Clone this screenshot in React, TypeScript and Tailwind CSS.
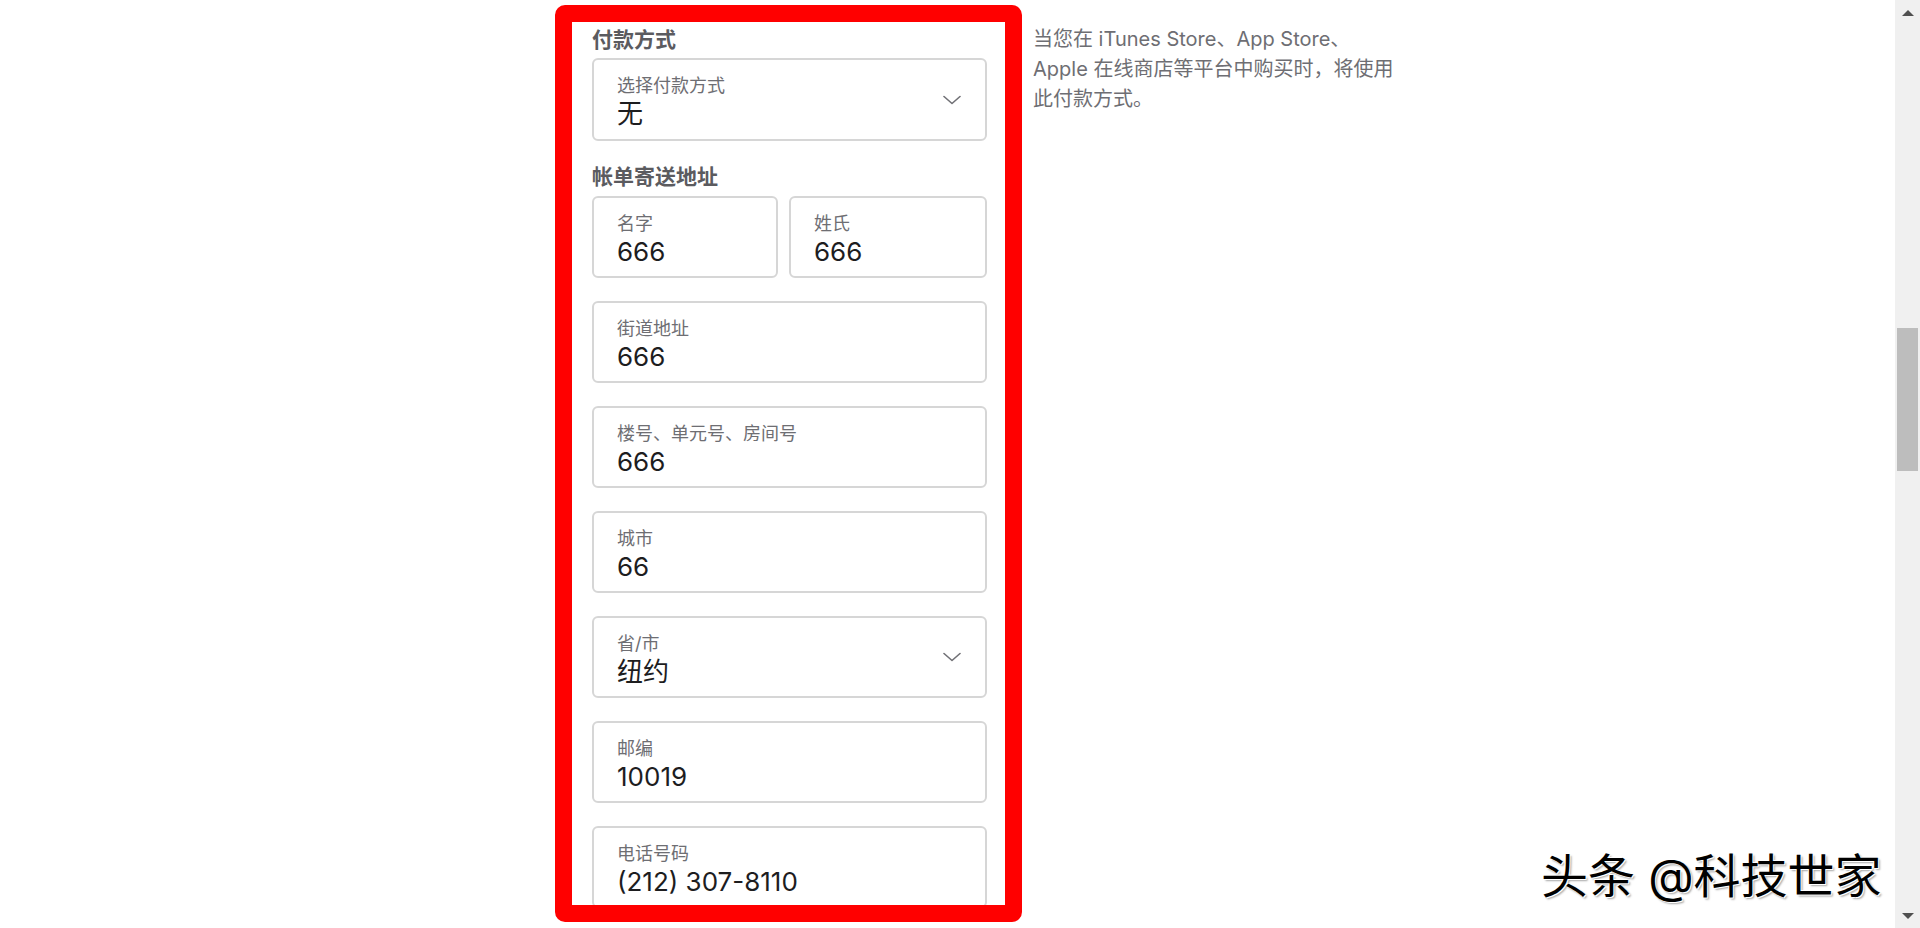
import React from 'react';

const font = 'Inter, "Noto Sans CJK SC", sans-serif';

interface FieldProps {
  label: string;
  value: string;
  select?: boolean;
  tall?: boolean;
}

function Field({ label, value, select, tall }: FieldProps) {
  return (
    <div
      className={`relative flex items-center border-2 border-[#d6d6d6] rounded-[6px] bg-white ${
        tall ? 'h-[83px]' : 'h-[82px]'
      }`}
    >
      <div className="flex-1 pl-[23px] pt-[15px] self-start">
        <div className="text-[18px] leading-[22px] text-[#6e6e73]">{label}</div>
        <div className="mt-[3px] text-[26px] leading-[28px] text-[#1d1d1f]">{value}</div>
      </div>
      {select && (
        <svg className="mr-[24px] w-[18px] h-[10px]" viewBox="0 0 18 10" fill="none">
          <path d="M1 1.5 L9 8.5 L17 1.5" stroke="#707075" strokeWidth="1.6" strokeLinecap="round" strokeLinejoin="round" />
        </svg>
      )}
    </div>
  );
}

function Scrollbar() {
  return (
    <div className="w-[25px] h-[928px] bg-[#f0f0f0] flex flex-col items-center shrink-0">
      <div className="mt-[10px] w-0 h-0 border-l-[6px] border-r-[6px] border-b-[6px] border-l-transparent border-r-transparent border-b-[#505050]" />
      <div className="mt-[312px] w-[21px] h-[143px] bg-[#bdbdbd]" />
      <div className="mt-[442px] w-0 h-0 border-l-[6px] border-r-[6px] border-t-[6px] border-l-transparent border-r-transparent border-t-[#505050]" />
    </div>
  );
}

export default function App() {
  return (
    <div className="relative w-[1920px] h-[928px] bg-white overflow-hidden flex" style={{ fontFamily: font }}>
      <div className="flex-1 flex pl-[555px] pt-[5px]">
        {/* annotated form */}
        <div className="w-[467px] h-[917px] border-[17px] border-[#ff0000] rounded-[10px] overflow-hidden bg-white shrink-0">
          <div className="pl-[20px] pr-[18px] pt-[5px] flex flex-col">
            <h3 className="text-[21px] leading-[26px] font-bold text-[#5b5b5f]">付款方式</h3>
            <div className="mt-[5px]">
              <Field label="选择付款方式" value="无" select tall />
            </div>
            <h3 className="mt-[23px] text-[21px] leading-[26px] font-bold text-[#5b5b5f]">帐单寄送地址</h3>
            <div className="mt-[6px] flex flex-col gap-[23px]">
              <div className="grid grid-cols-[186px_1fr] gap-[11px]">
                <Field label="名字" value="666" />
                <Field label="姓氏" value="666" />
              </div>
              <Field label="街道地址" value="666" />
              <Field label="楼号、单元号、房间号" value="666" />
              <Field label="城市" value="66" />
              <Field label="省/市" value="纽约" select />
              <Field label="邮编" value="10019" />
              <Field label="电话号码" value="(212) 307-8110" />
            </div>
          </div>
        </div>

        {/* side note */}
        <p className="ml-[11px] pt-[19px] w-[440px] text-[20px] leading-[30px] text-[#6e6e73]">
          当您在 iTunes Store、App Store、
          <br />
          Apple 在线商店等平台中购买时，将使用
          <br />
          此付款方式。
        </p>
      </div>

      <Scrollbar />

      {/* watermark */}
      <div
        className="absolute left-[1541px] top-[846px] text-[47px] leading-[60px] text-black whitespace-nowrap"
        style={{ textShadow: '1px 1px 0 #fff, -1px -1px 0 #fff, 2px 2px 2px rgba(0,0,0,0.35)' }}
      >
        头条 @科技世家
      </div>
    </div>
  );
}
